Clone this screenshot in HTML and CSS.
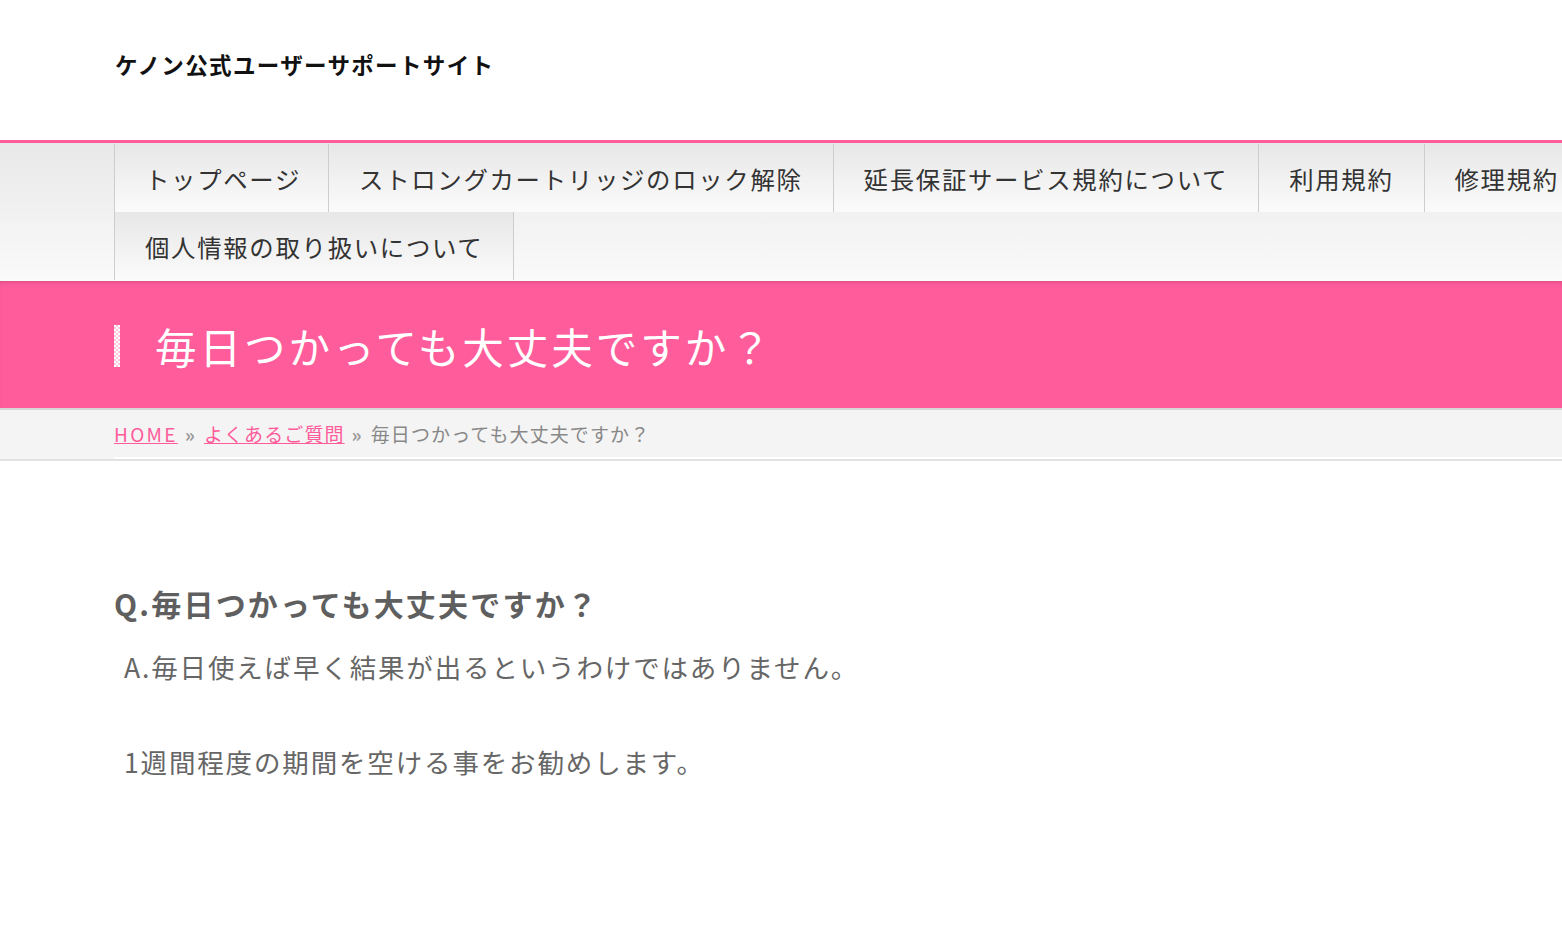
FILE: index.html
```html
<!DOCTYPE html>
<html lang="ja">
<head>
    <meta charset="UTF-8">
    <meta name="viewport" content="width=device-width, initial-scale=1.0">
    <title>毎日つかっても大丈夫ですか？ | ケノン公式ユーザーサポートサイト</title>
    <link rel="stylesheet" href="styles.css">
</head>
<body>
    <header class="site-header">
        <div class="wrap">
            <p class="site-title">ケノン公式ユーザーサポートサイト</p>
        </div>
    </header>

    <!-- グローバルナビ -->
    <nav class="global-nav">
        <ul class="nav-list">
            <li><a href="#">トップページ</a></li>
            <li><a href="#">ストロングカートリッジのロック解除</a></li>
            <li><a href="#">延長保証サービス規約について</a></li>
            <li><a href="#">利用規約</a></li>
            <li><a href="#">修理規約</a></li>
            <li><a href="#">個人情報の取り扱いについて</a></li>
        </ul>
    </nav>

    <div class="page-title">
        <div class="wrap">
            <h1><span class="mark"></span>毎日つかっても大丈夫ですか？</h1>
        </div>
    </div>

    <div class="breadcrumb">
        <div class="wrap">
            <div class="breadcrumb-inner">
                <a href="#" class="home">HOME</a><span class="sep">»</span><a href="#">よくあるご質問</a><span class="sep">»</span><span class="current">毎日つかっても大丈夫ですか？</span>
            </div>
        </div>
    </div>

    <main class="content">
        <div class="wrap">
            <h2>Q.毎日つかっても大丈夫ですか？</h2>
            <p>A.毎日使えば早く結果が出るというわけではありません。</p>
            <p>1週間程度の期間を空ける事をお勧めします。</p>
        </div>
    </main>
</body>
</html>
```

FILE: styles.css
```css
html, body {
    overflow-x: hidden;
}

body {
    margin: 0;
    padding: 0;
    background: #fff;
    font-family: "Noto Sans CJK JP", "Noto Sans", sans-serif;
    color: #666;
}

a {
    color: #ff5c9b;
}

.wrap {
    padding-left: 114px;
}

/* ヘッダー */
.site-header {
    height: 140px;
    padding-bottom: 12px;
    box-sizing: border-box;
    display: flex;
    align-items: center;
}

.site-title {
    margin: 0;
    padding-left: 1px;
    font-size: 22.5px;
    letter-spacing: 1.35px;
    font-weight: bold;
    color: #111;
    line-height: 30px;
}

/* ナビ */
.global-nav {
    border-top: 3px solid #ff5c9b;
    padding: 1px 0;
    background: linear-gradient(#e8e8e8, #fafafa);
    overflow: hidden;
}

.nav-list {
    list-style: none;
    margin: 0 0 0 114px;
    padding: 0;
    width: 1620px;
    display: flex;
    flex-wrap: wrap;
}

.nav-list li {
    border-left: 1px solid #cdcdcd;
    border-right: 1px solid #cdcdcd;
    margin-right: -1px;
    background: linear-gradient(#e7e7e7, #fbfbfb);
}

.nav-list a {
    display: block;
    height: 68px;
    line-height: 70px;
    padding: 0 30px;
    font-size: 24.4px;
    letter-spacing: 1.7px;
    color: #333;
    text-decoration: none;
}

.nav-list li:first-child a {
    padding-right: 27px;
}

/* ページタイトル */
.page-title {
    height: 127px;
    padding-top: 3px;
    box-sizing: border-box;
    display: flex;
    align-items: center;
    background: #ff5c9b;
    box-shadow: inset 0 3px 4px -2px rgba(0, 0, 0, 0.18);
}

.page-title .wrap {
    width: 100%;
}

.page-title h1 {
    margin: 0;
    display: flex;
    align-items: center;
    font-size: 41.5px;
    letter-spacing: 3px;
    font-weight: normal;
    color: #fff;
    line-height: 50px;
}

.mark {
    width: 6px;
    height: 42px;
    margin-right: 35px;
    background: repeating-conic-gradient(#fcc4da 0 25%, #fff 0 50%) 0 0 / 4px 4px;
}

/* パンくず */
.breadcrumb {
    border-top: 2px solid #d6d6d6;
    border-bottom: 2px solid #e2e2e2;
    background: #f4f4f4;
}

.breadcrumb-inner {
    height: 47px;
    line-height: 47px;
    border-bottom: 2px solid #fff;
    font-size: 19px;
    letter-spacing: 1.1px;
    color: #888;
}

.breadcrumb-inner .home {
    letter-spacing: 2.3px;
}

.breadcrumb-inner .sep {
    margin: 0 8px 0 7px;
    font-weight: bold;
    color: #999;
}

/* 本文 */
.content {
    padding-top: 122px;
    padding-bottom: 100px;
}

.content h2 {
    margin: 0 0 20px;
    font-size: 30px;
    letter-spacing: 2.2px;
    line-height: 40px;
    font-weight: bold;
    color: #5f5f5f;
}

.content p {
    margin: 0 0 47px;
    padding-left: 10px;
    font-size: 26.5px;
    letter-spacing: 1.85px;
    line-height: 48px;
    color: #666;
}
```
